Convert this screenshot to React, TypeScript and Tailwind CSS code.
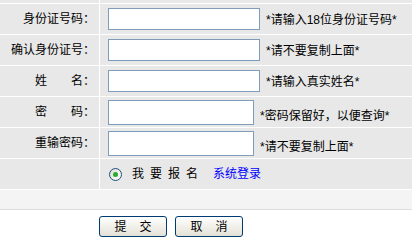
import { ReactNode } from 'react'

const font = "font-['Liberation_Sans','Noto_Sans_CJK_SC',sans-serif]"

function Row({ label, children }: { label: ReactNode; children: ReactNode }) {
  return (
    <div className="grid h-[30px] grid-cols-[99px_1fr] gap-px">
      <div className="flex items-center justify-end bg-[#e8e8e8] pr-[4px] text-[12px] leading-none text-black">
        {label}
      </div>
      <div className="flex items-center bg-[#e8e8e8] pl-[8px]">{children}</div>
    </div>
  )
}

function Field({ hint, password }: { hint: string; password?: boolean }) {
  return (
    <>
      <input
        type={password ? 'password' : 'text'}
        className={
          password
            ? 'h-[25px] w-[146px] border border-[#7f9db9] bg-white outline-none'
            : 'h-[22px] w-[152px] border border-[#7f9db9] bg-white outline-none'
        }
      />
      <span
        className={
          password
            ? 'ml-[6px] mt-[8px] text-[12px] leading-none text-black'
            : 'ml-[6px] mt-[2px] text-[12px] leading-none text-black'
        }
      >
        {hint}
      </span>
    </>
  )
}

function Button({ children }: { children: ReactNode }) {
  return (
    <button className="flex h-[21px] w-[68px] items-center justify-center gap-[13px] rounded-[3px] border border-[#003c74] bg-linear-to-b from-white to-[#e3e1d6] text-[12px] leading-none text-black">
      {children}
    </button>
  )
}

export default function App() {
  return (
    <div className={`${font} h-[248px] w-[412px] overflow-hidden bg-white`}>
      <div className="flex flex-col gap-px">
        <div className="grid h-[3px] grid-cols-[99px_1fr] gap-px">
          <div className="bg-[#e8e8e8]" />
          <div className="bg-[#e8e8e8]" />
        </div>
        <Row label="身份证号码：">
          <Field hint="*请输入18位身份证号码*" />
        </Row>
        <Row label="确认身份证号：">
          <Field hint="*请不要复制上面*" />
        </Row>
        <Row label="姓　　名：">
          <Field hint="*请输入真实姓名*" />
        </Row>
        <Row label="密　　码：">
          <Field hint="*密码保留好，以便查询*" password />
        </Row>
        <Row label="重输密码：">
          <Field hint="*请不要复制上面*" password />
        </Row>
        <Row label="">
          <div className="flex items-center pl-[1px]">
            <span className="flex h-[13px] w-[13px] items-center justify-center rounded-full border border-[#1c5180] bg-linear-to-br from-[#dcdcd6] to-white">
              <span className="h-[5px] w-[5px] rounded-full bg-[#2fa82f]" />
            </span>
            <span className="ml-[10px] flex gap-[6px] text-[12px] leading-none text-black">
              <span>我</span>
              <span>要</span>
              <span>报</span>
              <span>名</span>
            </span>
            <a className="ml-[15px] text-[12px] leading-none text-[#0000ff]">系统登录</a>
          </div>
        </Row>
        <div className="h-[20px] border-b border-[#dcdcdc] bg-[#f4f4f4]" />
      </div>
      <div className="flex gap-[8px] pl-[99px] pt-[6px]">
        <Button>
          <span>提</span>
          <span>交</span>
        </Button>
        <Button>
          <span>取</span>
          <span>消</span>
        </Button>
      </div>
    </div>
  )
}
